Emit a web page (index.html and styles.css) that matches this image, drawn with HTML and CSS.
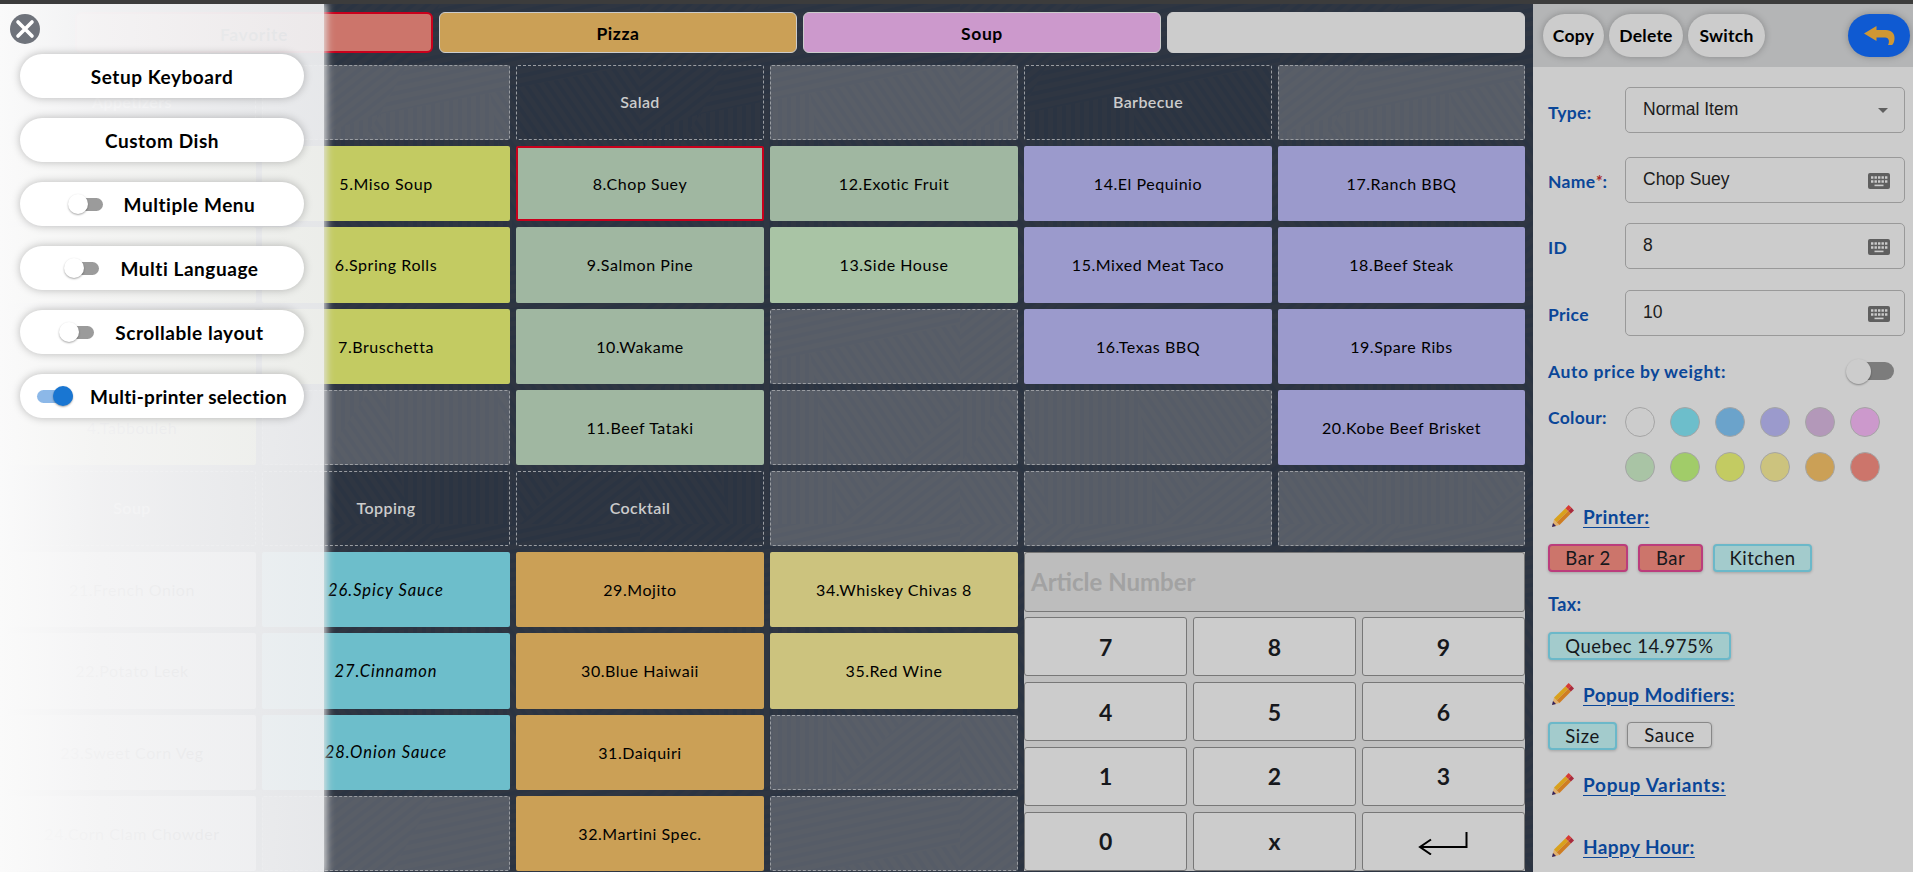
FILE: index.html
```html
<!DOCTYPE html>
<html lang="en">
<head>
    <meta charset="UTF-8">
    <meta name="viewport" content="width=device-width, initial-scale=1.0">
    <title>Keyboard Setup</title>
    <link rel="stylesheet" href="styles.css">
</head>
<body>

    <svg class="defs" width="0" height="0">
        <symbol id="pencil" viewBox="0 0 22 22">
            <path d="M0 22l2-7.500 5.500 5.500z" fill="#e0b070"/>
            <path d="M0 22l1-4 3 3z" fill="#2e1f5e"/>
            <path d="M2 14.500L13.500 3.200l2.800 2.800L4.700 17.300z" fill="#d9a11c"/>
            <path d="M4.700 17.300L16.300 6l2.600 2.600L7.500 20z" fill="#cf7d22"/>
            <path d="M13.500 3.200L16.700 0l2.800 2.800L16.300 6z" fill="#d63a35"/>
            <path d="M16.300 6l3.200-3.200L22 5.400l-3.100 3.200z" fill="#a82a3c"/>
        </symbol>
        <symbol id="keys" viewBox="0 0 22 16">
            <rect width="22" height="16" rx="2" fill="#5f5f5f"/>
            <path d="M3 4.500h16.500M3 8.500h16.500" stroke="#ccc" stroke-width="2.4" stroke-dasharray="2.4 1.1"/>
            <path d="M6.500 12.400h9" stroke="#ccc" stroke-width="1.6"/>
        </symbol>
    </svg>

    <div class="topbar"></div>

    <div class="screen">
        <main class="board">
            <div class="tabs">
                <div class="tab red active">Favorite</div>
                <div class="tab orange">Pizza</div>
                <div class="tab pink">Soup</div>
                <div class="tab blank"></div>
            </div>

            <div class="grid">
                <div class="cell title">Appetizers</div>
                <div class="cell"></div>
                <div class="cell title">Salad</div>
                <div class="cell"></div>
                <div class="cell title">Barbecue</div>
                <div class="cell"></div>

                <div class="cell olive"></div>
                <div class="cell olive">5.Miso Soup</div>
                <div class="cell sage selected">8.Chop Suey</div>
                <div class="cell sage">12.Exotic Fruit</div>
                <div class="cell violet">14.El Pequinio</div>
                <div class="cell violet">17.Ranch BBQ</div>

                <div class="cell olive"></div>
                <div class="cell olive">6.Spring Rolls</div>
                <div class="cell sage">9.Salmon Pine</div>
                <div class="cell green">13.Side House</div>
                <div class="cell violet">15.Mixed Meat Taco</div>
                <div class="cell violet">18.Beef Steak</div>

                <div class="cell olive"></div>
                <div class="cell olive">7.Bruschetta</div>
                <div class="cell sage">10.Wakame</div>
                <div class="cell"></div>
                <div class="cell violet">16.Texas BBQ</div>
                <div class="cell violet">19.Spare Ribs</div>

                <div class="cell olive">4.Tabbouleh</div>
                <div class="cell"></div>
                <div class="cell sage">11.Beef Tataki</div>
                <div class="cell"></div>
                <div class="cell"></div>
                <div class="cell violet">20.Kobe Beef Brisket</div>

                <div class="cell title">Soup</div>
                <div class="cell title">Topping</div>
                <div class="cell title">Cocktail</div>
                <div class="cell"></div>
                <div class="cell"></div>
                <div class="cell"></div>

                <div class="cell pale">21.French Onion</div>
                <div class="cell cyan">26.Spicy Sauce</div>
                <div class="cell orange">29.Mojito</div>
                <div class="cell khaki">34.Whiskey Chivas 8</div>
                <div class="keypad">
                    <div class="article">Article Number</div>
                    <div class="key">7</div>
                    <div class="key">8</div>
                    <div class="key">9</div>
                    <div class="key">4</div>
                    <div class="key">5</div>
                    <div class="key">6</div>
                    <div class="key">1</div>
                    <div class="key">2</div>
                    <div class="key">3</div>
                    <div class="key">0</div>
                    <div class="key">x</div>
                    <div class="key">
                        <svg width="50" height="24" viewBox="0 0 50 24" fill="none" stroke="#000" stroke-width="2">
                            <path d="M48.500 1v15H2M13 8.500L2 16l11 7.500"/>
                        </svg>
                    </div>
                </div>

                <div class="cell pale">22.Potato Leek</div>
                <div class="cell cyan">27.Cinnamon</div>
                <div class="cell orange">30.Blue Haiwaii</div>
                <div class="cell khaki">35.Red Wine</div>

                <div class="cell pale">23.Sweet Corn Veg</div>
                <div class="cell cyan">28.Onion Sauce</div>
                <div class="cell orange">31.Daiquiri</div>
                <div class="cell"></div>

                <div class="cell pale">24.Corn Clam Chowder</div>
                <div class="cell"></div>
                <div class="cell orange">32.Martini Spec.</div>
                <div class="cell"></div>
            </div>
        </main>

        <aside class="editor">
            <header class="editor-head">
                <button class="pill">Copy</button>
                <button class="pill">Delete</button>
                <button class="pill">Switch</button>
                <button class="pill back">
                    <svg width="31" height="20" viewBox="0 0 31 20">
                        <path d="M0 7.500L12.500 0v4H22c5.500 0 9 3.500 8.500 9-.2 2.500-1 4.500-2.300 6H24c1.600-2.500 1.500-7.500-3-7.500h-8.500v3.500z" fill="#cf9733"/>
                    </svg>
                </button>
            </header>

            <div class="fields">
                <div class="field type">
                    <label>Type:</label>
                    <div class="input">Normal Item
                        <svg class="caret" width="10" height="5" viewBox="0 0 10 5"><path d="M0 0h10L5 5z" fill="#5f5f5f"/></svg>
                    </div>
                </div>
                <div class="field name">
                    <label>Name<i>*</i>:</label>
                    <div class="input">Chop Suey <svg width="22" height="16"><use href="#keys"/></svg></div>
                </div>
                <div class="field id">
                    <label>ID</label>
                    <div class="input">8 <svg width="22" height="16"><use href="#keys"/></svg></div>
                </div>
                <div class="field price">
                    <label>Price</label>
                    <div class="input">10 <svg width="22" height="16"><use href="#keys"/></svg></div>
                </div>
            </div>

            <div class="weight">
                <label>Auto price by weight:</label>
                <span class="switch big"></span>
            </div>

            <div class="colours">
                <label>Colour:</label>
                <div class="dots">
                    <span class="dot"></span>
                    <span class="dot cyan"></span>
                    <span class="dot blue"></span>
                    <span class="dot violet"></span>
                    <span class="dot mauve"></span>
                    <span class="dot pink"></span>
                    <span class="dot green"></span>
                    <span class="dot lime"></span>
                    <span class="dot olive"></span>
                    <span class="dot khaki"></span>
                    <span class="dot orange"></span>
                    <span class="dot red"></span>
                </div>
            </div>

            <div class="heading printer"><svg width="22" height="22"><use href="#pencil"/></svg><a>Printer:</a></div>
            <div class="chips">
                <span class="chip bar bar-two">Bar 2</span>
                <span class="chip bar bar-one">Bar</span>
                <span class="chip kitchen">Kitchen</span>
            </div>

            <div class="heading tax">Tax:</div>
            <div class="chips"><span class="chip quebec">Quebec 14.975%</span></div>

            <div class="heading modifiers"><svg width="22" height="22"><use href="#pencil"/></svg><a>Popup Modifiers:</a></div>
            <div class="chips">
                <span class="chip size">Size</span>
                <span class="chip off">Sauce</span>
            </div>

            <div class="heading variants"><svg width="22" height="22"><use href="#pencil"/></svg><a>Popup Variants:</a></div>
            <div class="heading happy"><svg width="22" height="22"><use href="#pencil"/></svg><a>Happy Hour:</a></div>
        </aside>
    </div>

    <!-- Settings drawer over the board -->
    <nav class="drawer">
        <svg class="close" width="30" height="30" viewBox="0 0 30 30">
            <circle cx="15" cy="15" r="15" fill="#6f737b"/>
            <path d="M8 8l14 14M22 8L8 22" stroke="#fff" stroke-width="3.6" stroke-linecap="round"/>
        </svg>
        <button class="option">Setup Keyboard</button>
        <button class="option">Custom Dish</button>
        <button class="option"><span class="switch"></span>Multiple Menu</button>
        <button class="option"><span class="switch"></span>Multi Language</button>
        <button class="option"><span class="switch"></span>Scrollable layout</button>
        <button class="option multi"><span class="switch on"></span>Multi-printer selection</button>
    </nav>

</body>
</html>
```
FILE: styles.css
```css
* {
    box-sizing: border-box;
}

body {
    margin: 0;
    height: 100vh;
    overflow: hidden;
    font-family: Lato, "Liberation Sans", sans-serif;
    background: #2e3644;
    color: #000;
}

.defs {
    position: absolute;
}

.topbar {
    height: 4px;
    background: #3c3c3c;
}

.screen {
    display: flex;
    height: 868px;
}

/* Board with a faint hatched backdrop */
.board {
    width: 1533px;
    padding: 8px 8px 0;
    background-color: #2f3642;
    background-image: url("data:image/svg+xml,%3Csvg xmlns='http://www.w3.org/2000/svg' width='320' height='260'%3E%3Cdefs%3E%3Cpattern id='a' width='9' height='9' patternUnits='userSpaceOnUse' patternTransform='rotate(-38)'%3E%3Cpath d='M0 4h9' stroke='%232b3442' stroke-width='4'/%3E%3C/pattern%3E%3Cpattern id='b' width='9' height='9' patternUnits='userSpaceOnUse' patternTransform='rotate(-12)'%3E%3Cpath d='M0 4h9' stroke='%232b3442' stroke-width='4'/%3E%3C/pattern%3E%3Cpattern id='c' width='9' height='9' patternUnits='userSpaceOnUse' patternTransform='rotate(90)'%3E%3Cpath d='M0 4h9' stroke='%232b3442' stroke-width='4'/%3E%3C/pattern%3E%3Cpattern id='d' width='9' height='9' patternUnits='userSpaceOnUse' patternTransform='rotate(55)'%3E%3Cpath d='M0 4h9' stroke='%232b3442' stroke-width='4'/%3E%3C/pattern%3E%3C/defs%3E%3Cpath fill='url(%23a)' d='M0 0h120L60 110 0 130zM200 260l120-120v120z'/%3E%3Cpath fill='url(%23b)' d='M120 0h200v60L60 110z'/%3E%3Cpath fill='url(%23c)' d='M60 110l110-21 30 171H90zM0 130l60-20-60 90z'/%3E%3Cpath fill='url(%23d)' d='M170 89L320 60v80L200 260zM60 110l30 150H0v-60z'/%3E%3C/svg%3E");
}

.tabs {
    display: flex;
    gap: 6px;
    padding-left: 67px;
    height: 41px;
}

.tab {
    width: 358px;
    border: 1px solid #ccc;
    border-radius: 6px;
    font-size: 17.5px;
    font-weight: 700;
    letter-spacing: 0.6px;
    line-height: 42px;
    text-align: center;
}

.tab.active {
    border: 2px solid #c9001c;
}

.tab.blank {
    background: #ccc;
}

.grid {
    display: grid;
    grid-template-columns: repeat(5, 248px) 1fr;
    grid-template-rows: repeat(10, 1fr);
    gap: 6px;
    height: 806px;
    margin-top: 12px;
}

.cell {
    display: flex;
    align-items: center;
    justify-content: center;
    border: 1px dashed #9a9da2;
    border-radius: 2px;
    background: rgba(204, 204, 204, 0.27);
    font-size: 16px;
    letter-spacing: 0.55px;
}

.cell.title {
    padding-bottom: 2px;
    background: none;
    color: #ccc;
    font-weight: 600;
    letter-spacing: 0.4px;
}

.cell.olive,
.cell.sage,
.cell.green,
.cell.violet,
.cell.cyan,
.cell.orange,
.cell.khaki,
.cell.pale {
    border: 0;
}

.cell.cyan {
    font-size: 16.5px;
    font-style: italic;
    letter-spacing: 0.95px;
}

.cell.selected {
    border: 2px solid #c9001c;
}

.red { background: #cc756b; }
.orange { background: #cba056; }
.pink { background: #cc99cc; }
.olive { background: #c3cb62; }
.sage { background: #a0b7a1; }
.green { background: #a9c4a5; }
.violet { background: #9b9acc; }
.cyan { background: #6dbecb; }
.khaki { background: #ccc37e; }
.blue { background: #6ba3cb; }
.mauve { background: #b398b9; }
.lime { background: #a1cc69; }

.cell.orange { background: #cba056; }
.cell.olive { background: #c3cb62; }
.cell.sage { background: #a0b7a1; }
.cell.green { background: #a9c4a5; }
.cell.violet { background: #9b9acc; }
.cell.cyan { background: #6dbecb; }
.cell.khaki { background: #ccc37e; }
.cell.pale { background: #ccc; }

.keypad {
    grid-area: 7 / 5 / 11 / 7;
    display: grid;
    grid-template-columns: repeat(3, 1fr);
    grid-template-rows: repeat(5, 1fr);
    gap: 5.5px;
    background: #bfbfbf;
}

.article,
.key {
    display: flex;
    align-items: center;
    border: 1px solid #777;
    border-radius: 3px;
    font-size: 23px;
    font-weight: 700;
}

.article {
    grid-column: 1 / 4;
    padding-left: 6px;
    background: #bdbdbd;
    color: #a2a2a2;
    font-size: 24px;
}

.key {
    justify-content: center;
    background: #ccc;
    color: #16181c;
}

.key svg {
    margin-top: 4px;
}

/* Right side item editor */
.editor {
    width: 380px;
    background: #ccc;
}

.editor-head {
    display: flex;
    gap: 5px;
    height: 63px;
    padding: 10px 3px 10px 10px;
    background: #b4b5b6;
}

.pill {
    height: 43px;
    padding: 0;
    border: 0;
    border-radius: 22px;
    background: #ccc;
    box-shadow: 0 0 7px rgba(0, 0, 0, 0.25);
    font: 700 17.5px Lato, sans-serif;
    letter-spacing: 0.25px;
}

.pill:nth-child(1) { width: 61px; }
.pill:nth-child(2) { width: 74px; }
.pill:nth-child(3) { width: 77px; }

.pill.back {
    width: 62px;
    margin-left: auto;
    background: #0f5ad2;
    padding-top: 4px;
}

label,
.heading {
    color: #0a4698;
    font-size: 17.5px;
    font-weight: 700;
}

label {
    letter-spacing: 0.3px;
}

label i {
    color: #a82a2a;
}

.fields {
    padding: 20px 8px 0 15px;
}

.field {
    display: flex;
    height: 46px;
    margin-bottom: 20px;
}

.field.type {
    margin-bottom: 24px;
}

.field.id {
    margin-bottom: 21px;
}

.field label {
    width: 77px;
    padding-top: 14px;
}

.field.type label {
    padding-top: 15px;
}

.input {
    display: flex;
    flex: 1;
    align-items: center;
    justify-content: space-between;
    padding: 0 14px 2px 17px;
    border: 1px solid #999;
    border-radius: 5px;
    color: #1c1c1c;
    font-family: "Liberation Sans", Arial, sans-serif;
    font-size: 17.5px;
}

.input svg {
    margin-top: 3px;
}

.input .caret {
    margin-right: 2px;
}

.weight {
    display: flex;
    align-items: center;
    justify-content: space-between;
    height: 30px;
    margin-top: 1px;
    padding: 0 19px 0 15px;
}

.weight label {
    padding-top: 1px;
    letter-spacing: 0.6px;
}

.colours {
    display: flex;
    padding: 21px 0 0 15px;
}

.colours label {
    width: 77px;
}

.dots {
    display: grid;
    grid-template-columns: repeat(6, 30px);
    gap: 15px;
}

.dot {
    height: 30px;
    border: 1px solid #a5a5a5;
    border-radius: 50%;
}

.heading {
    display: flex;
    align-items: center;
    height: 24px;
    padding-left: 19px;
    font-size: 19px;
    letter-spacing: 0.4px;
}

.heading a {
    margin-left: 9px;
    text-decoration: underline;
    text-decoration-thickness: 1px;
    text-underline-offset: 3px;
}

.heading.printer { margin-top: 22px; }
.heading.tax { margin-top: 20px; padding-left: 15px; font-size: 18px; }
.heading.modifiers { margin-top: 22px; }
.heading.variants { margin-top: 22px; }
.heading.variants a { letter-spacing: 0.7px; }
.heading.happy { margin-top: 38px; }

.chips {
    display: flex;
    align-items: flex-start;
    gap: 10px;
    height: 28px;
    margin: 16px 0 0 15px;
}

.chip {
    height: 28px;
    border: 2px solid #6bb8c9;
    border-radius: 4px;
    background: #a3cbcc;
    box-shadow: 0 1px 3px rgba(0, 0, 0, 0.2);
    color: #16181c;
    font-size: 18.5px;
    letter-spacing: 0.5px;
    line-height: 24px;
    text-align: center;
}

.chip.bar {
    border-color: #bb3d7c;
    background: #cc756b;
}

.chip.off {
    width: 85px;
    height: 26px;
    border: 1px solid #888;
    background: #ccc;
}

.bar-two { width: 80px; }
.bar-one { width: 65px; }
.kitchen { width: 99px; }
.quebec { width: 183px; }
.size { width: 69px; }

/* Toggle switches */
.switch {
    display: flex;
    align-items: center;
    width: 34px;
    height: 13px;
    margin-right: 21px;
    border-radius: 7px;
    background: linear-gradient(90deg, transparent 8px, #9b9b9b 8px);
}

.switch::before {
    content: "";
    width: 20px;
    height: 20px;
    margin-left: -1px;
    border-radius: 50%;
    background: #fff;
    box-shadow: 0 1px 2px rgba(0, 0, 0, 0.35);
}

.switch.on {
    justify-content: flex-end;
    width: 36px;
    margin-right: 17px;
    background: #8cb8e8;
}

.switch.on::before {
    background: #1976d2;
}

.switch.big {
    width: 47px;
    height: 18px;
    margin-right: 0;
    border-radius: 9px;
    background: linear-gradient(90deg, transparent 12px, #7c7c7c 12px);
}

.switch.big::before {
    width: 25px;
    height: 25px;
    background: #ccc;
}

/* Drawer on the left */
.drawer {
    position: absolute;
    top: 4px;
    left: 0;
    width: 324px;
    height: 868px;
    padding: 10px 20px 0;
    background: linear-gradient(90deg, #fafafa, rgba(245, 245, 246, 0.98) 30%, rgba(238, 239, 241, 0.95));
    box-shadow: 0 0 8px 2px #e4e4e4;
    clip-path: inset(0 -12px 0 0);
}

.close {
    display: block;
    margin: 0 0 10px -10px;
}

.option {
    display: flex;
    align-items: center;
    justify-content: center;
    width: 284px;
    height: 44px;
    margin-bottom: 20px;
    padding: 0;
    border: 0;
    border-radius: 22px;
    background: #fff;
    box-shadow: 0 0 9px rgba(0, 0, 0, 0.25);
    font: 700 19px Lato, sans-serif;
    letter-spacing: 0.55px;
}

.option.multi {
    letter-spacing: 0.3px;
}
```
